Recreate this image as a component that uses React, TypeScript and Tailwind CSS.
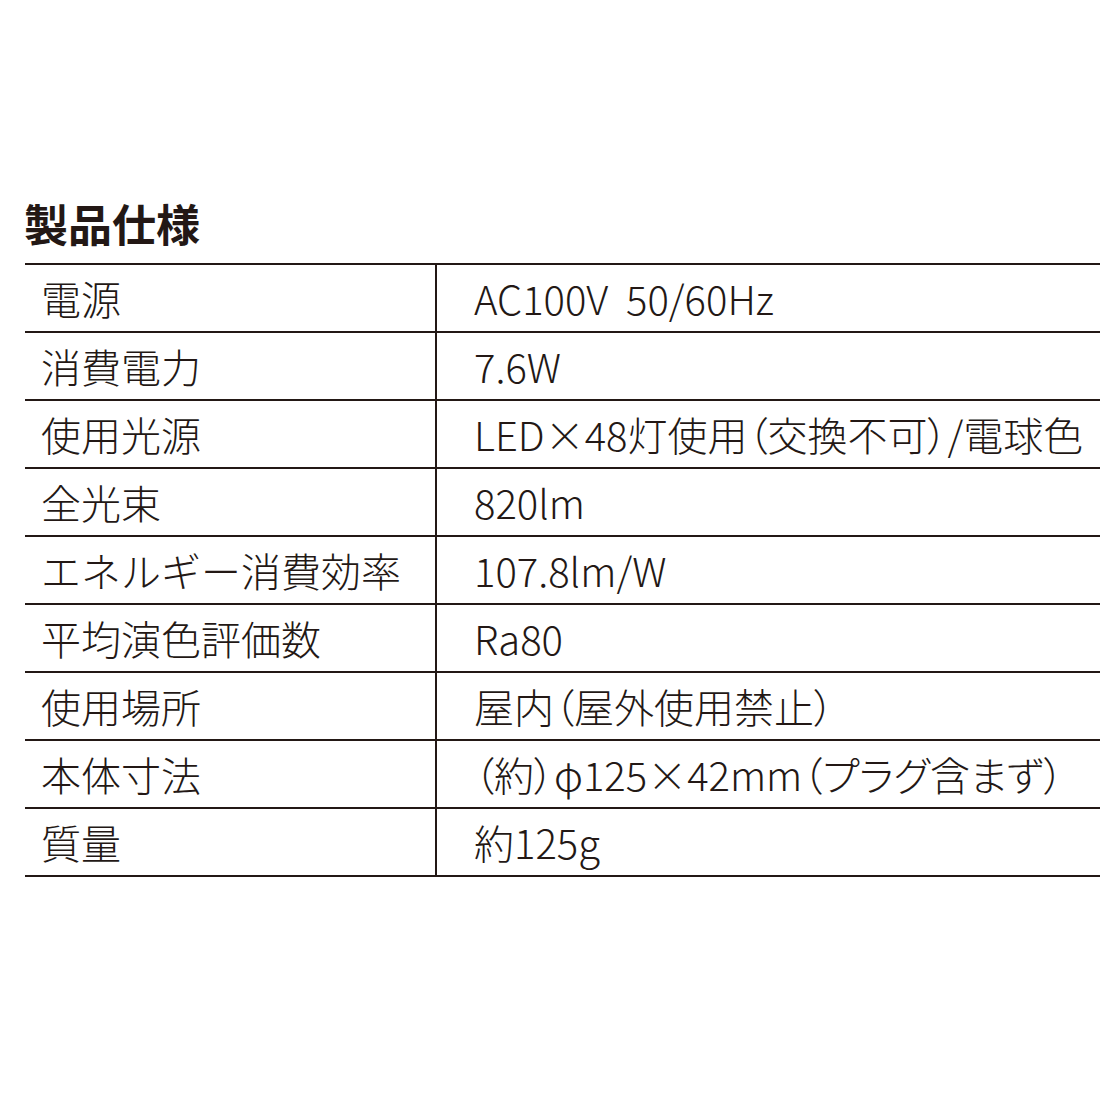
const specs: [string, string][] = [
  ['電源', 'AC100V\u00a0\u00a050/60Hz'],
  ['消費電力', '7.6W'],
  ['使用光源', 'LED×48灯使用（交換不可）/電球色'],
  ['全光束', '820lm'],
  ['エネルギー消費効率', '107.8lm/W'],
  ['平均演色評価数', 'Ra80'],
  ['使用場所', '屋内（屋外使用禁止）'],
  ['本体寸法', '（約）φ125×42mm（プラグ含まず）'],
  ['質量', '約125g'],
]

export default function App() {
  return (
    <div className="w-[1100px] h-[1100px] bg-white text-[#231815] pt-[201px] pl-[25px] font-['Noto_Sans_CJK_JP','Noto_Sans',sans-serif]">
      <h1 className="text-[44px] font-bold leading-none h-[46px] -ml-[1px]">製品仕様</h1>
      <div className="mt-[16px] border-t-2 border-[#231815]">
        {specs.map(([label, value]) => (
          <div key={label} className="flex h-[68px] border-b-2 border-[#231815]">
            <div className="w-[412px] shrink-0 border-r-2 border-[#231815] pl-[16px] flex items-center text-[40px] font-light leading-none">
              {label}
            </div>
            <div className="flex-1 pl-[37px] flex items-center text-[40px] font-light leading-none whitespace-nowrap [font-feature-settings:'palt']">
              {value}
            </div>
          </div>
        ))}
      </div>
    </div>
  )
}
